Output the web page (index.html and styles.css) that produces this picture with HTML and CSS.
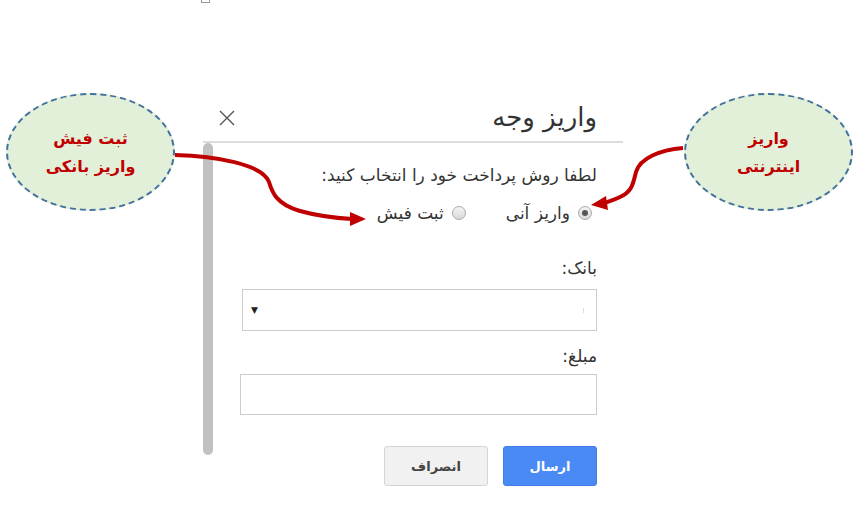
FILE: index.html
```html
<!DOCTYPE html>
<html lang="fa">
<head>
<meta charset="utf-8">
<link rel="stylesheet" href="styles.css">
</head>
<body>
<div class="page">
  <span class="corner-box"></span>
  <div class="dialog">
    <div class="header">
      <span class="close" aria-label="close">
        <svg width="16" height="16" viewBox="0 0 16 16"><path d="M1 1 L15 15 M15 1 L1 15" stroke="#555" stroke-width="1.4" fill="none"/></svg>
      </span>
      <h1 class="title">واریز وجه</h1>
    </div>
    <div class="body">
      <div class="scrollbar"></div>
      <div class="content">
        <div class="label first">لطفا روش پرداخت خود را انتخاب کنید:</div>
        <div class="radios">
          <label class="radio"><span class="dot checked"></span><span>واریز آنی</span></label>
          <label class="radio"><span class="dot"></span><span>ثبت فیش</span></label>
        </div>
        <div class="label bank">بانک:</div>
        <div class="select"><span class="sel-mark"></span><span class="arrow">▼</span></div>
        <div class="label amount">مبلغ:</div>
        <div class="input"></div>
        <div class="buttons">
          <button class="btn primary">ارسال</button>
          <button class="btn">انصراف</button>
        </div>
      </div>
    </div>
  </div>

  <div class="bubble left"><span>ثبت فیش</span><span>واریز بانکی</span></div>
  <div class="bubble right"><span>واریز</span><span>اینترنتی</span></div>

  <svg class="arrows" width="865" height="523" viewBox="0 0 865 523">
    <path d="M175 155 C 215 156, 262 164, 269 182 C 272 192, 276 204, 300 211 C 318 216, 335 218, 352 219" stroke="#c00000" stroke-width="4" fill="none"/>
    <polygon points="366,219 350,212 350,226" fill="#c00000"/>
    <path d="M683 148 C 660 150, 640 158, 636 172 C 633 184, 632 192, 620 197 C 614 200, 610 201, 605 203" stroke="#c00000" stroke-width="4" fill="none"/>
    <polygon points="591,205 606,196 608,210" fill="#c00000"/>
  </svg>
</div>
</body>
</html>
```

FILE: styles.css
```css
* { box-sizing: border-box; }
html, body { margin: 0; padding: 0; background: #fff; }
body { font-family: "DejaVu Sans", sans-serif; color: #333; }

.page {
  position: relative;
  width: 865px;
  height: 523px;
  overflow: hidden;
}

.corner-box {
  position: absolute;
  left: 201px;
  top: -6px;
  width: 9px;
  height: 9px;
  border: 1px solid #999;
}

.dialog {
  margin-left: 203px;
  padding-top: 95px;
  width: 420px;
}

.header {
  height: 48px;
  display: flex;
  align-items: center;
  justify-content: space-between;
  padding: 0 26px 0 16px;
  border-bottom: 2px solid #dcdcdc;
}

.close { display: flex; margin-top: 0; }

.title {
  margin: 0;
  font-size: 26px;
  font-weight: normal;
  direction: rtl;
  color: #333;
  margin-top: -3px;
}

.body {
  display: flex;
  height: 312px;
}

.scrollbar {
  width: 10px;
  height: 312px;
  background: #c1c1c1;
  border-radius: 5px;
  flex: none;
}

.content {
  flex: 1;
  direction: rtl;
  padding-right: 26px;
  padding-left: 27px;
  padding-top: 21px;
  position: relative;
}

.label {
  font-size: 17px;
  line-height: 22px;
  color: #333;
}

.radios {
  display: flex;
  gap: 35px;
  margin-top: 16px;
  font-size: 17px;
  line-height: 22px;
}

.radio { display: flex; align-items: center; gap: 8px; }

.dot {
  width: 14px;
  height: 14px;
  border-radius: 50%;
  border: 1px solid #a9a9a9;
  background: linear-gradient(#f4f4f4, #d8d8d8);
  position: relative;
  margin-right: 5px;
}
.dot.checked::after {
  content: "";
  position: absolute;
  left: 3px;
  top: 3px;
  width: 6px;
  height: 6px;
  border-radius: 50%;
  background: #555;
}

.bank { margin-top: 33px; }

.select {
  height: 42px;
  margin-top: 10px;
  margin-left: 2px;
  border: 1px solid #ccc;
  display: flex;
  align-items: center;
  justify-content: space-between;
  padding: 0 12px 0 8px;
}
.sel-mark { width: 1px; height: 5px; background: #ddd; }
.arrow { font-size: 9px; color: #222; }

.amount { margin-top: 14px; }

.input {
  height: 41px;
  margin-top: 7px;
  border: 1px solid #ccc;
}

.buttons {
  display: flex;
  gap: 15px;
  margin-top: 31px;
}

.btn {
  height: 40px;
  width: 104px;
  border: 1px solid #d5d5d5;
  border-radius: 3px;
  background: #f1f1f1;
  font-family: "DejaVu Sans", sans-serif;
  font-weight: bold;
  font-size: 13px;
  color: #444;
}
.btn.primary {
  width: 94px;
  background: #4a8af4;
  border-color: #3e7de6;
  color: #fff;
}

.bubble {
  position: absolute;
  width: 169px;
  height: 118px;
  border-radius: 50%;
  background: #e2efd9;
  border: 2px dashed #41719c;
  display: flex;
  flex-direction: column;
  align-items: center;
  justify-content: center;
  gap: 4px;
  padding-top: 2px;
  direction: rtl;
  color: #c00000;
  font-weight: bold;
  font-size: 16px;
  line-height: 24px;
}
.bubble.left { left: 6px; top: 93px; }
.bubble.right { left: 684px; top: 93px; }

.arrows {
  position: absolute;
  left: 0;
  top: 0;
  pointer-events: none;
}
```
